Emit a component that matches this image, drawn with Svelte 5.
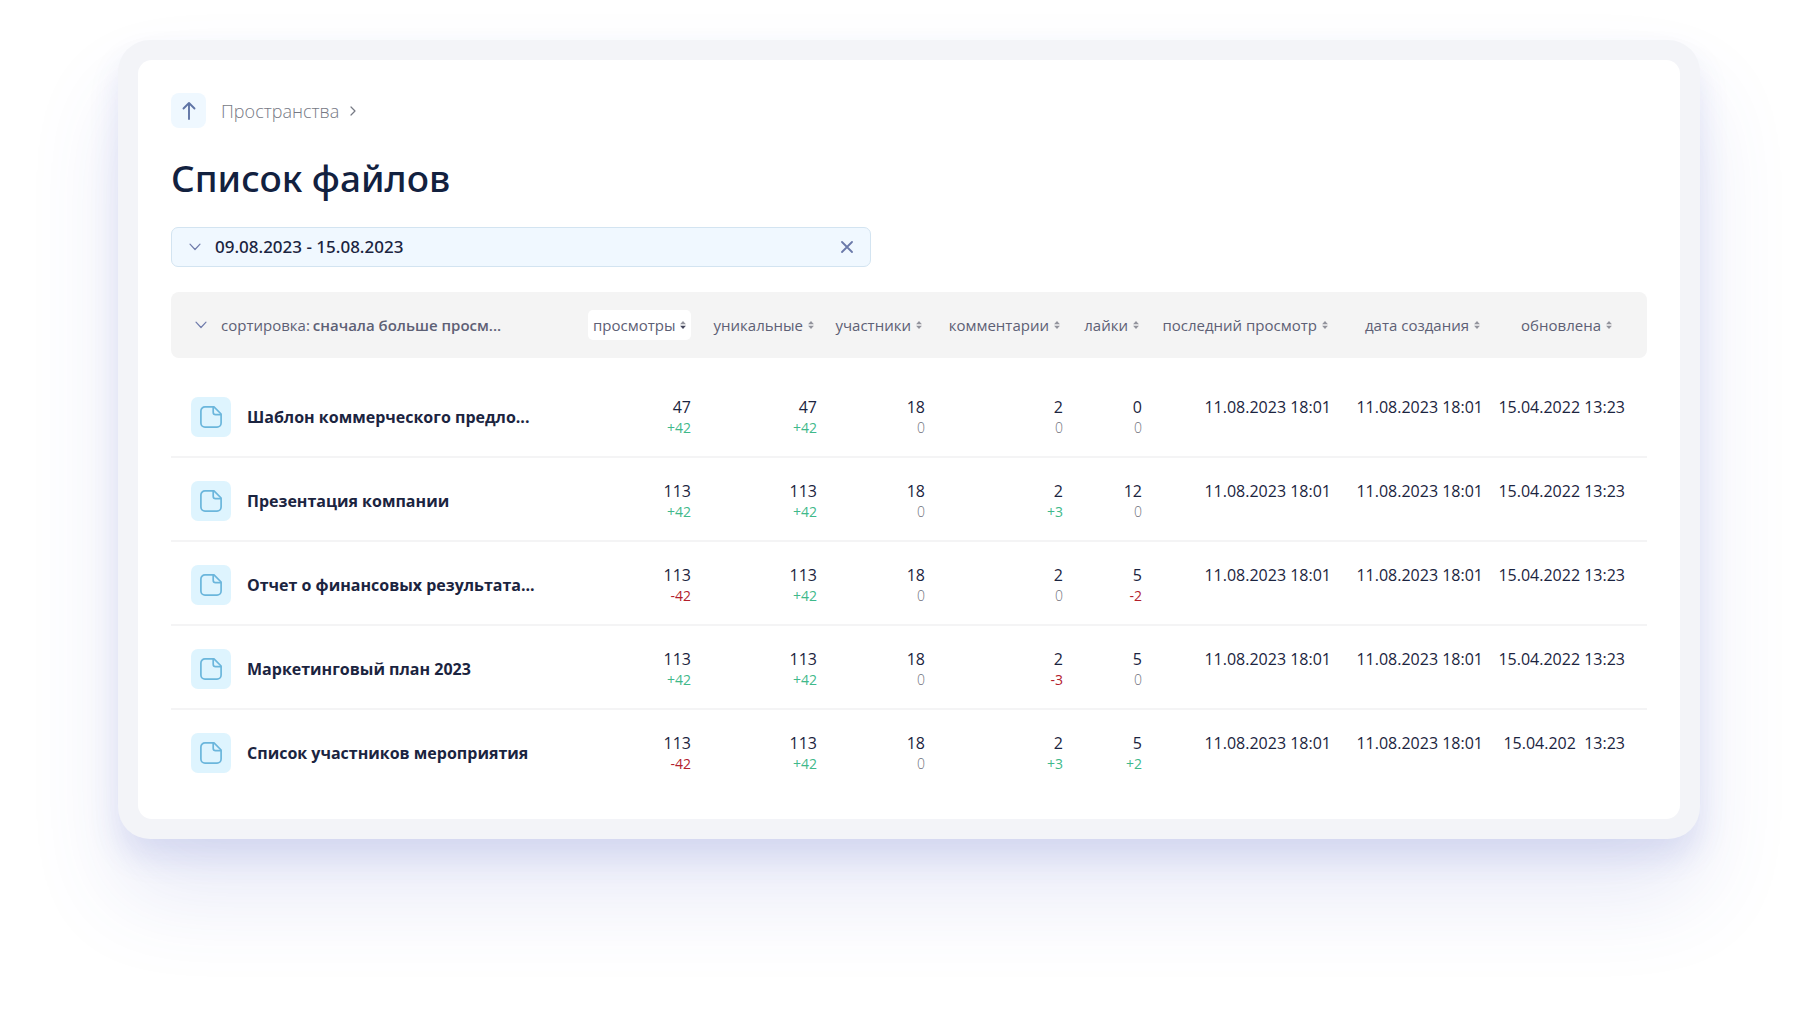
<script>
  let period = "09.08.2023 - 15.08.2023";
  let order = "views-desc";
  let sortKey = "views";

  const columns = [
    { key: "views", label: "просмотры" },
    { key: "unique", label: "уникальные" },
    { key: "members", label: "участники" },
    { key: "comments", label: "комментарии" },
    { key: "likes", label: "лайки" },
    { key: "seen", label: "последний просмотр" },
    { key: "created", label: "дата создания" },
    { key: "updated", label: "обновлена" },
  ];

  const seen = "11.08.2023 18:01";
  const created = "11.08.2023 18:01";
  const updated = "15.04.2022 13:23";

  // stats: [value, change] in the order of the numeric columns
  const files = [
    { name: "Шаблон коммерческого предло...", stats: [[47, 42], [47, 42], [18, 0], [2, 0], [0, 0]], dates: [seen, created, updated] },
    { name: "Презентация компании", stats: [[113, 42], [113, 42], [18, 0], [2, 3], [12, 0]], dates: [seen, created, updated] },
    { name: "Отчет о финансовых результата...", stats: [[113, -42], [113, 42], [18, 0], [2, 0], [5, -2]], dates: [seen, created, updated] },
    { name: "Маркетинговый план 2023", stats: [[113, 42], [113, 42], [18, 0], [2, -3], [5, 0]], dates: [seen, created, updated] },
    { name: "Список участников мероприятия", stats: [[113, -42], [113, 42], [18, 0], [2, 3], [5, 2]], dates: [seen, created, "15.04.202  13:23"] },
  ];

  function formatDelta(n) {
    return n > 0 ? `+${n}` : `${n}`;
  }
</script>

<div class="page">
  <div class="frame">
    <main class="panel">
      <nav class="crumbs">
        <button class="up" aria-label="Наверх">
          <svg width="20" height="20" viewBox="0 0 20 20" fill="none" stroke="currentColor" stroke-width="1.9" stroke-linecap="round" stroke-linejoin="round">
            <path d="M10 18V2M4.5 7.5L10 2l5.5 5.5" />
          </svg>
        </button>
        <a href="#spaces">Пространства</a>
        <svg class="next" width="6" height="10" viewBox="0 0 6 10" fill="none" stroke="currentColor" stroke-width="1.2" stroke-linecap="round" stroke-linejoin="round">
          <path d="M1 1l4 4-4 4" />
        </svg>
      </nav>

      <h1>Список файлов</h1>

      <div class="period">
        <svg class="chevron" width="12" height="8" viewBox="0 0 12 8" fill="none" stroke="currentColor" stroke-width="1.2" stroke-linecap="round" stroke-linejoin="round">
          <path d="M1 1.2l5 5.3 5-5.3" />
        </svg>
        <select aria-label="Период" bind:value={period}>
          <option>09.08.2023 - 15.08.2023</option>
        </select>
        <button class="clear" aria-label="Сбросить период">
          <svg width="12" height="12" viewBox="0 0 12 12" fill="none" stroke="currentColor" stroke-width="1.8" stroke-linecap="round">
            <path d="M1 1l10 10M11 1L1 11" />
          </svg>
        </button>
      </div>

      <table>
        <colgroup>
          <col />
          {#each columns as col}
            <col class={col.key} />
          {/each}
        </colgroup>
        <thead>
          <tr>
            <th>
              <div class="order">
                <svg class="chevron" width="12" height="8" viewBox="0 0 12 8" fill="none" stroke="currentColor" stroke-width="1.2" stroke-linecap="round" stroke-linejoin="round">
                  <path d="M1 1.2l5 5.3 5-5.3" />
                </svg>
                <label for="order">сортировка:</label>
                <select id="order" bind:value={order}>
                  <option value="views-desc">сначала больше просм...</option>
                </select>
              </div>
            </th>
            {#each columns as col}
              <th class="num">
                <button class="sort" class:active={sortKey === col.key} on:click={() => (sortKey = col.key)}>
                  {col.label}
                  <svg width="6" height="8" viewBox="0 0 6 8">
                    <path class="asc" d="M3 0L5.9 3.3H0.1z" />
                    <path class="desc" d="M3 8L0.1 4.7h5.8z" />
                  </svg>
                </button>
              </th>
            {/each}
          </tr>
        </thead>
        <tbody>
          {#each files as file}
            <tr>
              <td class="name">
                <a href="#file">
                  <span class="icon">
                    <svg width="22" height="22" viewBox="0 0 22 22" fill="none" stroke="currentColor" stroke-width="1.7" stroke-linejoin="round">
                      <path d="M14 0.9H5A4.1 4.1 0 0 0 0.9 5v12A4.1 4.1 0 0 0 5 21.1h12a4.1 4.1 0 0 0 4.1-4.1V8z" />
                      <path d="M13.2 0.9v5.4a2.4 2.4 0 0 0 2.4 2.4h5.5" />
                    </svg>
                  </span>
                  {file.name}
                </a>
              </td>
              {#each file.stats as [value, delta]}
                <td class="num">
                  <div>{value}</div>
                  <div class="delta" class:plus={delta > 0} class:minus={delta < 0}>{formatDelta(delta)}</div>
                </td>
              {/each}
              {#each file.dates as date}
                <td class="num date">{date}</td>
              {/each}
            </tr>
          {/each}
        </tbody>
      </table>
    </main>
  </div>
</div>

<style>
  :global(body) {
    margin: 0;
    background: #fff;
  }

  .page {
    padding: 40px 118px 196px;
    font-family: "Open Sans", "Noto Sans", sans-serif;
    color: #1b2440;
    overflow: hidden;
  }

  .frame {
    padding: 20px;
    border-radius: 32px;
    background: #f3f4f8;
    box-shadow:
      0 18px 30px rgba(66, 86, 190, 0.13),
      0 56px 90px rgba(66, 86, 190, 0.13);
  }

  .panel {
    padding: 33px 33px 25px;
    border-radius: 14px;
    background: #fff;
  }

  button,
  select {
    margin: 0;
    padding: 0;
    border: none;
    background: none;
    font: inherit;
    color: inherit;
    cursor: pointer;
  }

  select {
    appearance: none;
  }

  a {
    color: inherit;
    text-decoration: none;
  }

  svg {
    display: block;
    flex: none;
  }

  .crumbs {
    display: flex;
    align-items: center;
    font-size: 18px;
    font-weight: 300;
    color: #767984;
  }

  .up {
    display: grid;
    place-items: center;
    width: 35px;
    height: 35px;
    margin-right: 15px;
    border-radius: 8px;
    background: #eff8ff;
    color: #6075a6;
  }

  .next {
    margin-left: 11px;
  }

  h1 {
    margin: 25px 0 24px;
    font-family: "Noto Sans", sans-serif;
    font-size: 37px;
    line-height: 50px;
    font-weight: 500;
    color: #12213f;
  }

  .period {
    display: flex;
    align-items: center;
    gap: 14px;
    box-sizing: border-box;
    max-width: 700px;
    height: 40px;
    padding: 0 17px;
    border: 1px solid #d3e4f1;
    border-radius: 7px;
    background: #f0f8ff;
    font-family: "Noto Sans", sans-serif;
    font-size: 17px;
    font-weight: 500;
  }

  .period select {
    flex: 1;
    padding-bottom: 2px;
  }

  .chevron {
    color: #6f7bab;
  }

  .clear {
    color: #6b7aaa;
  }

  table {
    width: 100%;
    margin-top: 25px;
    border-collapse: separate;
    border-spacing: 0;
    table-layout: fixed;
  }

  .views { width: 103px; }
  .unique { width: 126px; }
  .members { width: 108px; }
  .comments { width: 138px; }
  .likes { width: 79px; }
  .seen { width: 189px; }
  .created { width: 152px; }
  .updated { width: 164px; }

  th {
    height: 66px;
    padding: 0;
    background: #f4f4f4;
    font-size: 15px;
    font-weight: 400;
    color: #5d6075;
    text-align: left;
    white-space: nowrap;
  }

  th:first-child {
    border-radius: 8px 0 0 8px;
  }

  th:last-child {
    padding-right: 32px;
    border-radius: 0 8px 8px 0;
  }

  .num {
    text-align: right;
  }

  .order {
    display: flex;
    align-items: center;
    padding-left: 24px;
  }

  .order label {
    margin: 0 3px 0 14px;
  }

  .order select {
    font-weight: 600;
  }

  .sort {
    display: inline-flex;
    align-items: center;
    gap: 5px;
    height: 30px;
    padding: 0 3px;
    border-radius: 5px;
  }

  .sort svg {
    fill: #92939c;
  }

  .sort.active {
    padding: 0 5px;
    background: #fff;
  }

  .sort.active .desc {
    fill: #45475c;
  }

  /* gap between the header bar and the first row */
  tbody::before {
    content: "";
    display: table-row;
    height: 16px;
  }

  td {
    box-sizing: border-box;
    height: 84px;
    padding: 23px 0 0;
    border-bottom: 2px solid #f4f4f5;
    font-size: 16px;
    line-height: 20px;
    vertical-align: top;
    white-space: nowrap;
  }

  tr:last-child td {
    border-bottom-color: transparent;
  }

  td:last-child {
    padding-right: 22px;
  }

  .date {
    white-space: pre;
  }

  .name {
    padding: 4px 0 0 20px;
    vertical-align: middle;
    font-weight: 700;
  }

  .name a {
    display: flex;
    align-items: center;
    gap: 16px;
  }

  .icon {
    display: grid;
    place-items: center;
    width: 40px;
    height: 40px;
    border-radius: 7px;
    background: #def4fe;
    color: #6bb6dc;
  }

  .delta {
    font-size: 14px;
    line-height: 22px;
    font-weight: 300;
    color: #6f727d;
  }

  .delta.plus {
    font-weight: 400;
    color: #3fb98a;
  }

  .delta.minus {
    font-weight: 400;
    color: #b3202c;
  }
</style>
